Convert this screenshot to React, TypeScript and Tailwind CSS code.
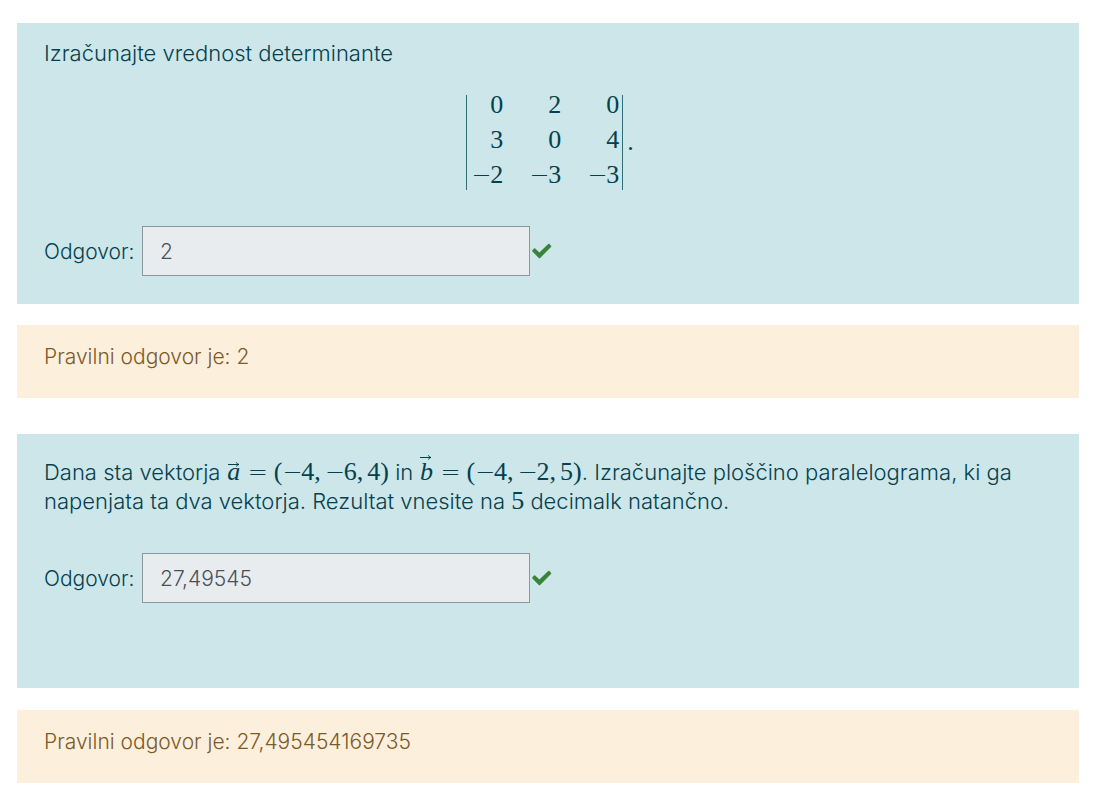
import type { ReactNode } from "react";

function Digits({ children }: { children: ReactNode }) {
  return <span className="font-['Liberation_Serif',serif] text-[26px] leading-5">{children}</span>;
}

function Sign({ children, className = "" }: { children: ReactNode; className?: string }) {
  return (
    <span
      className={`inline-block w-[19px] text-center font-['DejaVu_Sans',sans-serif] text-2xl leading-5 font-extralight ${className}`}
    >
      {children}
    </span>
  );
}

function Num({ value }: { value: number }) {
  return (
    <span className="whitespace-nowrap">
      {value < 0 && <Sign>−</Sign>}
      <Digits>{Math.abs(value)}</Digits>
    </span>
  );
}

function Vector({ name, values }: { name: string; values: number[] }) {
  return (
    <span className="whitespace-nowrap">
      <span className="relative inline-block w-[14px] text-center font-['Liberation_Serif',serif] text-[26px] leading-5 italic">
        {name}
        <svg
          className={`absolute left-0 h-[5px] w-[13px] ${name === "b" ? "top-[-7px]" : "top-0"}`}
          viewBox="0 0 13 5"
          fill="none"
          stroke="currentColor"
          aria-hidden="true"
        >
          <path d="M1 2.5H12M9.3 .3C9.8 1.5 10.8 2.2 12 2.5C10.8 2.8 9.8 3.4 9.5 4.6" />
        </svg>
      </span>
      <Sign className="mx-[7px]">=</Sign>
      <Digits>(</Digits>
      {values.map((v, i) => (
        <span key={i}>
          {i > 0 && <span className="mr-1"><Digits>,</Digits></span>}
          <Num value={v} />
        </span>
      ))}
      <Digits>)</Digits>
    </span>
  );
}

function Determinant({ rows }: { rows: number[][] }) {
  return (
    <div className="flex items-center justify-center pl-1">
      <table className="border-x border-[#2f6d77]">
        <tbody className="leading-5">
          {rows.map((row, i) => (
            <tr key={i} className="group">
              {row.map((v, j) => (
                <td
                  key={j}
                  className="pt-[14px] pr-[3px] pl-[23px] text-right group-first:pt-0 group-last:pb-1 first:pl-1"
                >
                  <Num value={v} />
                </td>
              ))}
            </tr>
          ))}
        </tbody>
      </table>
      <span className="pl-1">
        <Digits>.</Digits>
      </span>
    </div>
  );
}

function Answer({ id, value }: { id: string; value: string }) {
  return (
    <div className="flex items-center">
      <label htmlFor={id} className="w-[98px] shrink-0">
        Odgovor:
      </label>
      <input
        id={id}
        type="text"
        readOnly
        defaultValue={value}
        className="h-[50px] w-[388px] border border-[#8a979f] bg-[#e8ecef] px-[17px] text-[#495057] outline-none"
      />
      <svg className="ml-[2px] h-4 w-5" viewBox="0 0 20 16" role="img" aria-label="Pravilno">
        <path
          d="M3.2 5.4L7.4 9.6L16.2 .9Q16.8 .5 17.4 1L19 2.7Q19.6 3.3 19 4L8.2 14.9Q7.5 15.5 6.8 14.9L.4 8.5Q-.1 7.8 .4 7.2L2 5.5Q2.6 5 3.2 5.4Z"
          fill="#398439"
        />
      </svg>
    </div>
  );
}

function Feedback({ children }: { children: ReactNode }) {
  return <section className="bg-[#fcefdc] px-[27px] pt-[17px] pb-[27px] text-[#7d5a29]">{children}</section>;
}

export default function App() {
  return (
    <main className="bg-white pt-[23px] pr-4 pb-3 pl-[17px] font-[Inter,sans-serif] text-[21px] leading-[29px] font-light">
      <section className="bg-[#cde6ea] px-[27px] pt-4 pb-7 text-[#04414d]">
        <p className="mb-[27px] text-[22px] leading-[29px]">Izračunajte vrednost determinante</p>
        <Determinant
          rows={[
            [0, 2, 0],
            [3, 0, 4],
            [-2, -3, -3],
          ]}
        />
        <div className="mt-9">
          <Answer id="odgovor-1" value="2" />
        </div>
      </section>
      <div className="mt-[21px]">
        <Feedback>Pravilni odgovor je: 2</Feedback>
      </div>

      <section className="mt-9 bg-[#cde6ea] px-[27px] pt-6 pb-[85px] text-[#04414d]">
        <p className="mb-[37px] text-[22px] leading-[29px]">
          Dana sta vektorja <Vector name="a" values={[-4, -6, 4]} /> in <Vector name="b" values={[-4, -2, 5]} />.
          Izračunajte ploščino paralelograma, ki ga napenjata ta dva vektorja. Rezultat vnesite na <Digits>5</Digits>{" "}
          decimalk natančno.
        </p>
        <Answer id="odgovor-2" value="27,49545" />
      </section>
      <div className="mt-[22px]">
        <Feedback>Pravilni odgovor je: 27,495454169735</Feedback>
      </div>
    </main>
  );
}
